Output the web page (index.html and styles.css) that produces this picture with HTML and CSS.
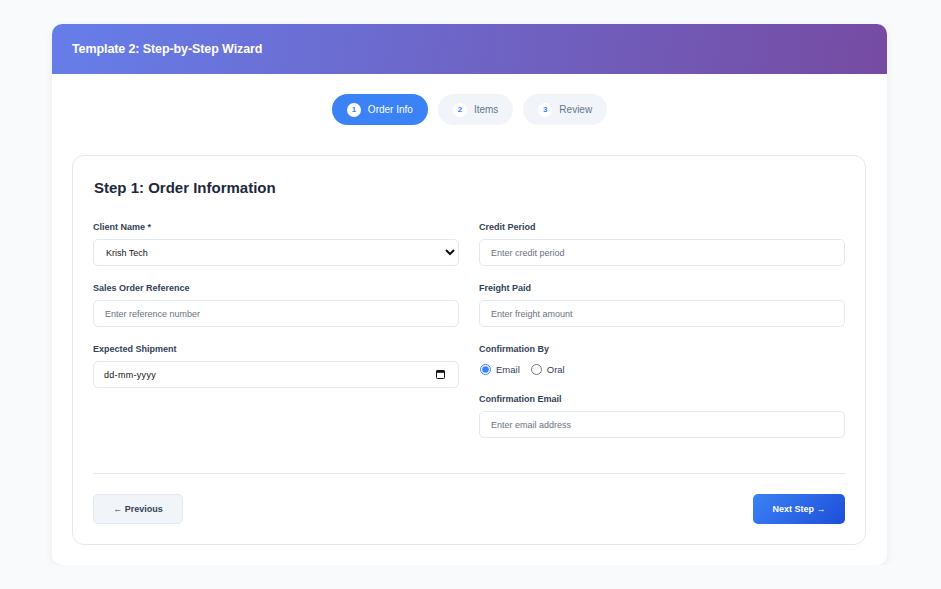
FILE: index.html
```html
<!DOCTYPE html>
<html lang="en">
<head>
<meta charset="utf-8">
<title>Step-by-Step Wizard</title>
<link rel="stylesheet" href="styles.css">
</head>
<body>
<div class="card">
  <div class="card-header">Template 2: Step-by-Step Wizard</div>
  <div class="card-body">
    <div class="stepper">
      <div class="step active"><span class="step-num">1</span>Order Info</div>
      <div class="step"><span class="step-num">2</span>Items</div>
      <div class="step"><span class="step-num">3</span>Review</div>
    </div>
    <div class="panel">
      <h2 class="panel-title">Step 1: Order Information</h2>
      <div class="grid">
        <div class="col">
          <div class="group">
            <label class="label">Client Name *</label>
            <select class="control select"><option>Krish Tech</option></select>
          </div>
          <div class="group">
            <label class="label">Sales Order Reference</label>
            <input class="control" type="text" placeholder="Enter reference number">
          </div>
          <div class="group">
            <label class="label">Expected Shipment</label>
            <div class="control date-field">
              <input class="date-input" type="text" placeholder="dd-mm-yyyy">
              <svg class="cal-icon" width="9" height="9" viewBox="0 0 9 9" aria-hidden="true">
                <rect x="0.5" y="0.5" width="8" height="8" rx="0.8" fill="none" stroke="#111" stroke-width="1"/>
                <rect x="0.5" y="0.5" width="8" height="2.3" fill="#111"/>
              </svg>
            </div>
          </div>
        </div>
        <div class="col">
          <div class="group">
            <label class="label">Credit Period</label>
            <input class="control" type="text" placeholder="Enter credit period">
          </div>
          <div class="group">
            <label class="label">Freight Paid</label>
            <input class="control" type="text" placeholder="Enter freight amount">
          </div>
          <div class="group">
            <label class="label">Confirmation By</label>
            <div class="radios">
              <label class="radio"><input type="radio" name="conf" checked>Email</label>
              <label class="radio"><input type="radio" name="conf">Oral</label>
            </div>
          </div>
          <div class="group">
            <label class="label">Confirmation Email</label>
            <input class="control" type="email" placeholder="Enter email address">
          </div>
        </div>
      </div>
      <div class="footer">
        <button class="btn btn-prev">← Previous</button>
        <button class="btn btn-next">Next Step →</button>
      </div>
    </div>
  </div>
</div>
</body>
</html>
```

FILE: styles.css
```css
* { box-sizing: border-box; }
html, body { margin: 0; padding: 0; }
body {
  background: #f8fafc;
  font-family: "Liberation Sans", Arial, sans-serif;
  color: #1e293b;
  padding: 24px 0 0 52px;
}
.card {
  width: 835px;
  background: #fff;
  border-radius: 10px;
  box-shadow: 0 2px 8px rgba(15, 23, 42, 0.06);
  overflow: hidden;
}
.card-header {
  height: 50px;
  display: flex;
  align-items: center;
  padding: 0 20px 1px 20px;
  color: #fff;
  font-weight: bold;
  font-size: 12.5px;
  letter-spacing: -0.1px;
  background: linear-gradient(100deg, #667eea 0%, #764ba2 100%);
}
.card-body {
  padding: 20px 21px 20px 20px;
}
.stepper {
  display: flex;
  justify-content: center;
  gap: 10px;
  margin-bottom: 30px;
  padding-left: 1px;
}
.step {
  height: 31px;
  display: flex;
  align-items: center;
  gap: 7px;
  padding: 0 15px;
  border-radius: 16px;
  background: #f1f5f9;
  color: #64748b;
  font-size: 10px;
}
.step.active {
  background: #3b82f6;
  color: #fff;
}
.step-num {
  width: 14px;
  height: 14px;
  border-radius: 50%;
  background: #fff;
  color: #3b82f6;
  display: flex;
  align-items: center;
  justify-content: center;
  font-size: 8px;
  font-weight: bold;
}
.panel {
  border: 1px solid #e2e8f0;
  border-radius: 12px;
  padding: 22px 20px 20px 20px;
}
.panel-title {
  margin: 0 0 23px 1px;
  font-size: 15px;
  line-height: 20px;
  font-weight: bold;
  color: #1e293b;
}
.grid {
  display: grid;
  grid-template-columns: 1fr 1fr;
  gap: 20px;
}
.group {
  display: flex;
  flex-direction: column;
  margin-bottom: 16px;
}
.label {
  font-size: 9px;
  line-height: 13px;
  font-weight: bold;
  color: #334155;
  margin-bottom: 5px;
}
.control {
  height: 27px;
  border: 1px solid #e2e8f0;
  border-radius: 5px;
  padding: 0 11px;
  font-family: "Liberation Sans", Arial, sans-serif;
  font-size: 9px;
  color: #111;
  background: #fff;
  outline: none;
}
.control::placeholder { color: #6b7280; }
.select { padding-left: 8px; }
.date-field {
  display: flex;
  align-items: center;
  justify-content: space-between;
  padding: 0 13px 0 10px;
}
.date-input {
  border: none;
  outline: none;
  padding: 0;
  flex: 1;
  font-family: "Liberation Sans", Arial, sans-serif;
  font-size: 9px;
  letter-spacing: 0.3px;
  color: #111;
  background: transparent;
}
.date-input::placeholder { color: #111; }
.cal-icon { flex: none; }
.radios {
  display: flex;
  align-items: center;
  gap: 10px;
  height: 16px;
}
.radio {
  display: flex;
  align-items: center;
  font-size: 9.5px;
  color: #334155;
}
.radio input {
  margin: 0 5px 0 1px;
  width: 11px;
  height: 11px;
  accent-color: #3b82f6;
}
.footer {
  margin-top: 19px;
  border-top: 1px solid #e2e8f0;
  padding-top: 20px;
  display: flex;
  justify-content: space-between;
}
.btn {
  height: 30px;
  border-radius: 5px;
  font-family: "Liberation Sans", Arial, sans-serif;
  font-size: 9px;
  font-weight: bold;
  cursor: pointer;
}
.btn-prev {
  width: 90px;
  background: #f1f5f9;
  border: 1px solid #e2e8f0;
  color: #334155;
}
.btn-next {
  width: 92px;
  border: none;
  color: #fff;
  background: linear-gradient(135deg, #3b82f6 0%, #1d4ed8 100%);
}
```
